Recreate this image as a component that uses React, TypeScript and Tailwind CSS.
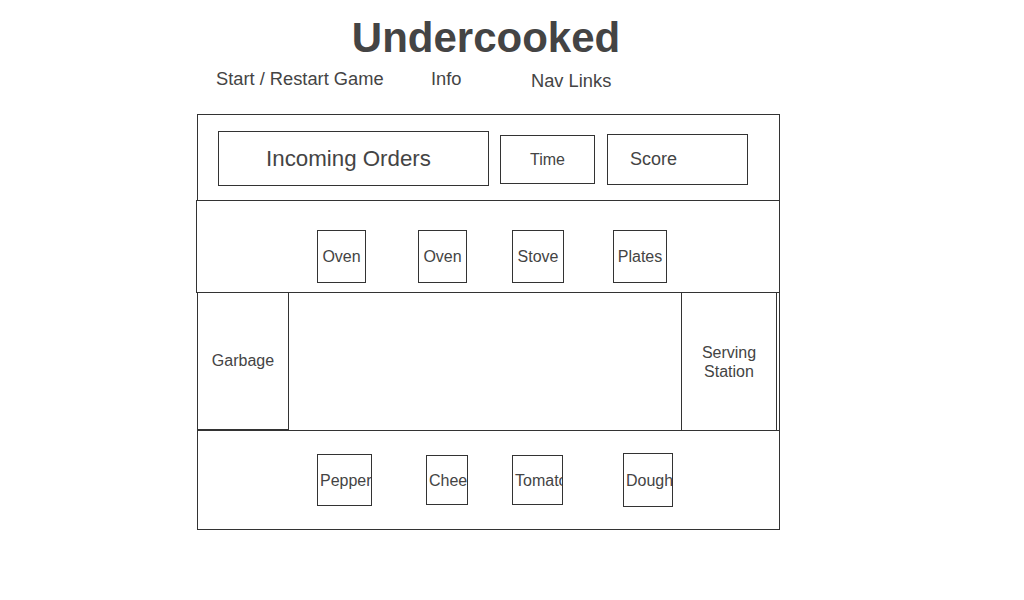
import React from "react";

function Tile({ label, w, h, className = "" }: { label: string; w: string; h: string; className?: string }) {
  return (
    <div className={`flex items-center overflow-hidden border border-[#333] px-[2px] ${w} ${h} ${className}`}>
      <div className="w-full whitespace-nowrap text-center text-[16px] leading-[19px]">{label}</div>
    </div>
  );
}

export default function App() {
  return (
    <div className="h-[600px] w-[1024px] bg-white font-['Liberation_Sans',Arial,sans-serif] text-[#444]">
      <div className="ml-[197px] w-[583px] pt-[12px]">
        <h1 className="pr-[5px] text-center text-[42px] font-bold leading-[52px]">Undercooked</h1>

        {/* nav */}
        <div className="mt-[4px] flex items-start text-[18.3px] leading-[22px]">
          <div className="ml-[19px] w-[215px]">Start / Restart Game</div>
          <div className="w-[100px]">Info</div>
          <div className="mt-[2px]">Nav Links</div>
        </div>

        {/* board */}
        <div className="mt-[22px]">
          <div className="flex h-[86px] items-start border-x border-t border-[#333]">
            <div className="ml-[20px] mt-[16px] flex h-[55px] w-[271px] items-center justify-center border border-[#333] pr-[10px] text-[22.3px]">
              Incoming Orders
            </div>
            <div className="ml-[11px] mt-[20px] flex h-[49px] w-[95px] items-center justify-center border border-[#333] text-[16px]">
              Time
            </div>
            <div className="ml-[12px] mt-[19px] flex h-[51px] w-[141px] items-center border border-[#333] pl-[22px] text-[18px]">
              Score
            </div>
          </div>

          <div className="-ml-px flex h-[93px] items-start border border-[#333] pl-[120px]">
            <Tile label="Oven" w="w-[49px]" h="h-[53px]" className="mt-[29px]" />
            <Tile label="Oven" w="w-[49px]" h="h-[53px]" className="ml-[52px] mt-[29px]" />
            <Tile label="Stove" w="w-[52px]" h="h-[53px]" className="ml-[45px] mt-[29px]" />
            <Tile label="Plates" w="w-[54px]" h="h-[53px]" className="ml-[49px] mt-[29px]" />
          </div>

          <div className="flex h-[137px] border-x border-[#333]">
            <div className="flex w-[91px] items-center justify-center border-b border-r border-[#333] text-[16px]">
              Garbage
            </div>
            <div className="flex-1" />
            <div className="mr-[2px] flex w-[96px] items-center justify-center border-x border-[#333] text-center text-[16px] leading-[19px]">
              Serving
              <br />
              Station
            </div>
          </div>

          <div className="flex h-[100px] items-start border border-[#333] pl-[119px]">
            <Tile label="Pepper" w="w-[55px]" h="h-[52px]" className="mt-[23px]" />
            <Tile label="Cheese" w="w-[42px]" h="h-[50px]" className="ml-[54px] mt-[24px]" />
            <Tile label="Tomato" w="w-[51px]" h="h-[50px]" className="ml-[44px] mt-[24px]" />
            <Tile label="Dough" w="w-[50px]" h="h-[54px]" className="ml-[60px] mt-[22px]" />
          </div>
        </div>
      </div>
    </div>
  );
}
